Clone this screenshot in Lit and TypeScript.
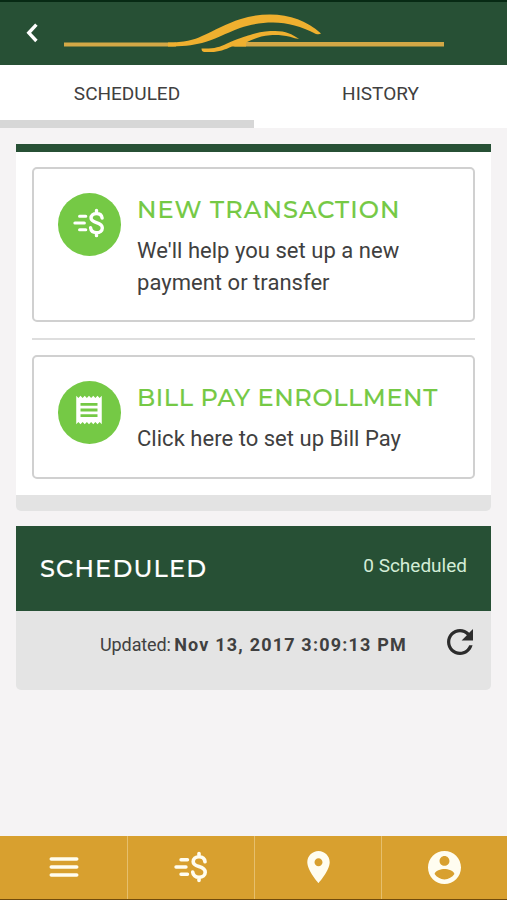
import { LitElement, html, css, svg } from "lit";
import { customElement, property } from "lit/decorators.js";

const moneyMotion = svg`
  <g fill="none" stroke="currentColor" stroke-linecap="round">
    <path stroke-width="3.400" d="M8 8.800H14.500M3 16H13M8 23.200H14.500" />
    <path stroke-width="3.600" d="M32 10.800C31.600 7.700 29.200 5.800 26 5.800C22.500 5.800 20.200 7.900 20.200 10.700C20.200 17.100 32.200 14 32.200 21.200C32.200 24.200 29.600 26.300 26 26.300C22.500 26.300 20 24.200 19.700 21M26 2.500V5M26 27V29.500" />
  </g>`;

const icons: Record<string, { box: string; body: unknown }> = {
  back: { box: "0 0 12 20", body: svg`<path fill="none" stroke="currentColor" stroke-width="3.400" d="M10.400 1.600 2.800 9.800 10.400 18" />` },
  money: { box: "0 0 36 32", body: moneyMotion },
  receipt: { box: "0 0 24 24", body: svg`<path fill="currentColor" d="M18 17H6v-2h12v2zm0-4H6v-2h12v2zm0-4H6V7h12v2zM3 22l1.500-1.500L6 22l1.500-1.500L9 22l1.500-1.500L12 22l1.500-1.500L15 22l1.500-1.500L18 22l1.500-1.500L21 22V2l-1.500 1.500L18 2l-1.500 1.500L15 2l-1.500 1.500L12 2l-1.500 1.500L9 2 7.500 3.500 6 2 4.500 3.500 3 2v20z" />` },
  refresh: { box: "4 4 16 16", body: svg`<path fill="currentColor" d="M17.650 6.350C16.200 4.900 14.210 4 12 4c-4.420 0-7.990 3.580-7.990 8s3.570 8 7.990 8c3.730 0 6.840-2.550 7.730-6h-2.080c-.820 2.330-3.040 4-5.650 4-3.310 0-6-2.690-6-6s2.690-6 6-6c1.660 0 3.140.690 4.220 1.780L13 11h7V4l-2.350 2.350z" />` },
  menu: { box: "0 0 30 22", body: svg`<path fill="none" stroke="currentColor" stroke-width="3.600" stroke-linecap="round" d="M2.300 3H27.700M2.300 11H27.700M2.300 19H27.700" />` },
  place: { box: "5 2 14 20", body: svg`<path fill="currentColor" d="M12 2C8.130 2 5 5.130 5 9c0 5.250 7 13 7 13s7-7.750 7-13c0-3.870-3.130-7-7-7zm0 9.500c-1.380 0-2.500-1.120-2.500-2.500s1.120-2.500 2.500-2.500 2.500 1.120 2.500 2.500-1.120 2.500-2.500 2.500z" />` },
  account: { box: "2 2 20 20", body: svg`<path fill="currentColor" d="M12 2C6.480 2 2 6.480 2 12s4.480 10 10 10 10-4.480 10-10S17.520 2 12 2zm0 3c1.660 0 3 1.340 3 3s-1.340 3-3 3-3-1.340-3-3 1.340-3 3-3zm0 14.200c-2.500 0-4.710-1.280-6-3.220.030-1.990 4-3.080 6-3.080 1.990 0 5.970 1.090 6 3.080-1.290 1.940-3.500 3.220-6 3.220z" />` },
};

@customElement("app-icon")
class AppIcon extends LitElement {
  @property() name = "menu";
  static styles = css`
    :host { display: block; flex: none; }
    svg { display: block; width: 100%; height: 100%; }
  `;
  render() {
    const icon = icons[this.name];
    return html`<svg viewBox=${icon.box}>${icon.body}</svg>`;
  }
}

@customElement("action-card")
class ActionCard extends LitElement {
  @property() icon = "";
  @property() heading = "";
  @property() text = "";
  static styles = css`
    :host { display: flex; box-sizing: border-box; border: 2px solid #d0d0d0; border-radius: 5px; padding: 24px 20px 0 23.500px; gap: 16px; }
    .badge { display: flex; align-items: center; justify-content: center; flex: none; box-sizing: border-box; width: 63.500px; height: 63px; border-radius: 50%; background: #75c945; color: #fff; }
    .badge.money { padding-bottom: 3px; }
    .badge.receipt { padding-bottom: 5px; }
    app-icon.money { width: 34px; height: 30px; }
    app-icon.receipt { width: 36px; height: 34px; }
    .copy { flex: 1; min-width: 0; }
    .heading { display: block; padding-top: 1px; white-space: nowrap; color: #75c945; font: 500 24px/32px "Montserrat", Lato, sans-serif; -webkit-text-stroke: 0.150px #75c945; }
    .heading.money { letter-spacing: 1.070px; }
    .heading.receipt { letter-spacing: 0.600px; }
    .text { display: block; margin-top: 9px; color: #404040; font: 400 22px/32px Roboto, sans-serif; letter-spacing: 0.030px; }
  `;
  render() {
    return html`
      <span class="badge ${this.icon}"><app-icon class=${this.icon} name=${this.icon}></app-icon></span>
      <div class="copy">
        <span class="heading ${this.icon}">${this.heading}</span>
        <span class="text">${this.text}</span>
      </div>`;
  }
}

@customElement("app-root")
class AppRoot extends LitElement {
  static styles = css`
    :host { display: flex; flex-direction: column; height: 900px; box-sizing: border-box; background: #f5f3f4; font-family: Roboto, sans-serif; color: #404040; overflow: hidden; }
    header { display: flex; box-sizing: border-box; height: 65px; border-top: 2px solid #072a14; background: #275035; color: #fff; }
    .back { width: 12px; height: 20px; margin: 20.500px 0 0 26px; }
    .logo { display: block; width: 384px; height: 44px; margin: 8px 0 0 24px; }
    .tabs { display: grid; grid-template-columns: 254px 1fr; height: 63px; background: #fff; }
    .tab { box-sizing: border-box; text-align: center; padding-top: 16px; font-size: 19px; line-height: 25px; border-bottom: 8px solid transparent; }
    .active { border-color: #d7d7d7; }
    main { flex: 1; padding: 16px 16px 0; }
    .panel { box-sizing: border-box; height: 367px; background: #fff; border-top: 8px solid #275035; border-bottom: 16px solid #e3e3e3; border-radius: 0 0 5px 5px; padding: 15px 16px 0; }
    .first { height: 155px; }
    .rule { height: 2px; margin: 16px 0 15px; background: #dedede; }
    .second { height: 124px; }
    .summary { margin-top: 15px; border-radius: 0 0 5px 5px; background: #e4e4e4; overflow: hidden; }
    .title { display: flex; justify-content: space-between; align-items: center; height: 85px; padding: 0 24px; background: #275035; color: #fff; }
    .name { font: 500 24px/32px "Montserrat", Lato, sans-serif; letter-spacing: 1.200px; -webkit-text-stroke: 0.150px #fff; }
    .count { font-size: 19px; line-height: 24px; color: #d4edd7; margin-bottom: 6px; }
    .status { display: flex; height: 79px; padding-left: 84px; padding-right: 18px; justify-content: space-between; }
    .stamp { padding-top: 22px; font-size: 18px; line-height: 24px; letter-spacing: -0.100px; white-space: nowrap; }
    .stamp b { letter-spacing: 1.190px; margin-left: -1px; }
    .refresh { width: 26px; height: 26px; margin-top: 18px; color: #2c2c2c; }
    nav { display: grid; grid-template-columns: 128px 127px 127px 1fr; box-sizing: border-box; height: 64px; background: #d8a02f; border-bottom: 1px solid #714b0c; color: #fffdf0; }
    .item { display: flex; align-items: center; justify-content: center; box-sizing: border-box; border-right: 1px solid #e6bf6c; padding-bottom: 1px; }
    .item:last-child { border-right: 0; }
    .menu { width: 30px; height: 22px; }
    .money { width: 36px; height: 32px; }
    .place { width: 23px; height: 32px; }
    .account { width: 33px; height: 33px; }
  `;
  render() {
    return html`
      <header>
        <app-icon class="back" name="back"></app-icon>
        <svg class="logo" viewBox="62 10 384 44">
          <g fill="#efb02f">
            <path fill="#d3a846" d="M64 42.500H176V46.500H64zM240 42H444V46.500H234z" />
            <path d="M168 42.500C184 42.500 194 40 202 36C214 30.500 228 23 240 19.200C250 16 260 14.500 270 14.500C290 14.500 307 21 321 33.500Q319.500 34.800 316 34C301 26.500 288 22.500 273 22.500C261 22.500 250 24.500 240 28C226 33.500 213 40 202 43C192 45.500 182 46.500 168 46.500z" />
            <path d="M201.500 48.500C213 49 219 47.500 227 43.500C238 38.500 245 36.500 250 35C260 31.500 268 31 275 31C286 31 292 34 299 39Q295 38.500 290 36.800C283 35 276 34.800 270 35.200C260 36 253 39 246 42.500V46.500H232C225 49.500 219 52 211 52H204Q201.500 51.500 201.500 48.500z" />
          </g>
        </svg>
      </header>
      <div class="tabs">
        <div class="tab active">SCHEDULED</div>
        <div class="tab">HISTORY</div>
      </div>
      <main>
        <section class="panel">
          <action-card class="first" icon="money" heading="NEW TRANSACTION" text="We'll help you set up a new payment or transfer"></action-card>
          <div class="rule"></div>
          <action-card class="second" icon="receipt" heading="BILL PAY ENROLLMENT" text="Click here to set up Bill Pay"></action-card>
        </section>
        <section class="summary">
          <div class="title"><span class="name">SCHEDULED</span><span class="count">0 Scheduled</span></div>
          <div class="status">
            <div class="stamp">Updated: <b>Nov 13, 2017 3:09:13 PM</b></div>
            <app-icon class="refresh" name="refresh"></app-icon>
          </div>
        </section>
      </main>
      <nav>
        ${["menu", "money", "place", "account"].map(
          (name) => html`<div class="item"><app-icon class=${name} name=${name}></app-icon></div>`
        )}
      </nav>`;
  }
}
